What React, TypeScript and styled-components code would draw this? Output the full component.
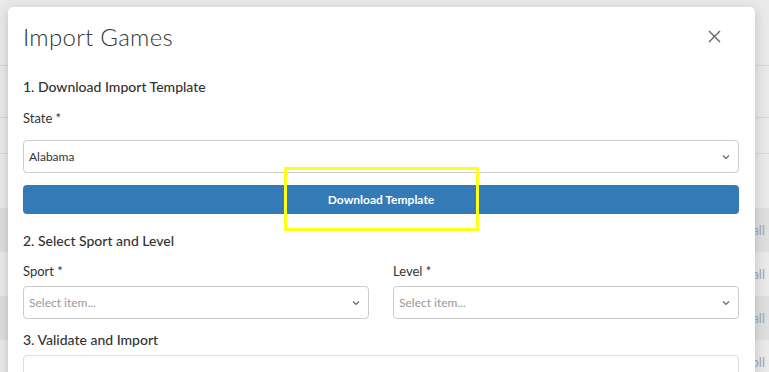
import React from "react";
import styled, { createGlobalStyle } from "styled-components";

const Global = createGlobalStyle`
  html, body { margin: 0; padding: 0; }
  body {
    font-family: Lato, "Noto Sans", "Liberation Sans", sans-serif;
    color: #333;
    background: #e9e9e9;
    overflow: hidden;
  }
  * { box-sizing: border-box; }
`;

const Page = styled.div`
  position: relative;
  width: 769px;
  height: 372px;
  overflow: hidden;
  background: #e9e9e9;
`;

const BgHeader = styled.div`
  height: 66px;
  border-bottom: 1px solid #d6d6d6;
`;

const BgBar = styled.div`
  height: 52px;
  border-bottom: 1px solid #d6d6d6;
`;

const BgFilter = styled.div`
  height: 36px;
  border-bottom: 1px solid #d9d9d9;
`;

const BgRow = styled.div<{ $shade?: boolean }>`
  height: 44px;
  background: ${(p) => (p.$shade ? "#dedede" : "#e9e9e9")};
  display: flex;
  align-items: center;
  justify-content: flex-end;
  padding-right: 4px;
  font-size: 13px;
  color: #9aa8bd;
`;

const Spacer = styled.div`
  height: 54px;
`;

const Modal = styled.div`
  position: absolute;
  left: 8px;
  top: 7px;
  width: 747px;
  height: 420px;
  background: #fff;
  border-radius: 5px;
  box-shadow: 0 3px 12px rgba(0, 0, 0, 0.18);
`;

const Header = styled.div`
  display: flex;
  align-items: center;
  justify-content: space-between;
  padding: 14px 15px 0 15px;
`;

const Title = styled.h4`
  margin: 0;
  font-size: 24px;
  font-weight: 300;
  line-height: 32px;
  letter-spacing: 0.3px;
  color: #333;
`;

const Close = styled.button`
  border: none;
  background: none;
  padding: 0;
  width: 14px;
  height: 14px;
  margin-right: 18px;
  display: flex;
  color: #666;
  cursor: pointer;
`;

const Body = styled.div`
  padding: 25px 16px 0 15px;
`;

const SectionTitle = styled.div<{ $mt?: number }>`
  font-size: 14px;
  font-weight: 500;
  line-height: 18px;
  margin-top: ${(p) => p.$mt ?? 0}px;
`;

const Label = styled.div<{ $mt?: number; $mb?: number }>`
  font-size: 13px;
  line-height: 16px;
  margin-top: ${(p) => p.$mt ?? 0}px;
  margin-bottom: ${(p) => p.$mb ?? 14}px;
`;

const SelectBox = styled.div<{ $placeholder?: boolean }>`
  height: 33px;
  border: 1px solid #ccc;
  border-radius: 4px;
  display: flex;
  align-items: center;
  justify-content: space-between;
  padding: 0 8px 0 5px;
  font-size: 12px;
  color: ${(p) => (p.$placeholder ? "#999" : "#333")};
`;

const Chevron = () => (
  <svg width="8" height="6" viewBox="0 0 8 6" fill="none">
    <path d="M1 1.5 L4 4.5 L7 1.5" stroke="#666" strokeWidth="1.2" />
  </svg>
);

const Button = styled.button`
  display: block;
  width: 100%;
  height: 29px;
  margin-top: 12px;
  border: none;
  border-radius: 4px;
  background: #337ab7;
  color: #fff;
  font-family: inherit;
  font-size: 12px;
  font-weight: 700;
  cursor: pointer;
`;

const Cols = styled.div`
  display: grid;
  grid-template-columns: 1fr 1fr;
  column-gap: 24px;
`;

const Field = styled.div``;

const Area = styled.div`
  margin-top: 6px;
  height: 40px;
  border: 1px solid #ddd;
  border-radius: 4px;
`;

const Highlight = styled.div`
  position: absolute;
  left: 276px;
  top: 160px;
  width: 195px;
  height: 64px;
  border: 3px solid #ffff1a;
  pointer-events: none;
`;

export default function App() {
  return (
    <>
      <Global />
      <Page>
        <BgHeader />
        <BgBar />
        <BgFilter />
        <Spacer />
        <BgRow $shade>all</BgRow>
        <BgRow>all</BgRow>
        <BgRow $shade>all</BgRow>
        <BgRow>Voll</BgRow>
        <Modal>
          <Header>
            <Title>Import Games</Title>
            <Close aria-label="Close">
              <svg width="13" height="13" viewBox="0 0 13 13">
                <path d="M1 1 L12 12 M12 1 L1 12" stroke="#666" strokeWidth="1.4" />
              </svg>
            </Close>
          </Header>
          <Body>
            <SectionTitle>1. Download Import Template</SectionTitle>
            <Label $mt={14}>State *</Label>
            <SelectBox>
              <span>Alabama</span>
              <Chevron />
            </SelectBox>
            <Button>Download Template</Button>
            <SectionTitle $mt={18}>2. Select Sport and Level</SectionTitle>
            <Cols>
              <Field>
                <Label $mt={13} $mb={7}>Sport *</Label>
                <SelectBox $placeholder>
                  <span>Select item...</span>
                  <Chevron />
                </SelectBox>
              </Field>
              <Field>
                <Label $mt={13} $mb={7}>Level *</Label>
                <SelectBox $placeholder>
                  <span>Select item...</span>
                  <Chevron />
                </SelectBox>
              </Field>
            </Cols>
            <SectionTitle $mt={12}>3. Validate and Import</SectionTitle>
            <Area />
          </Body>
          <Highlight />
        </Modal>
      </Page>
    </>
  );
}
